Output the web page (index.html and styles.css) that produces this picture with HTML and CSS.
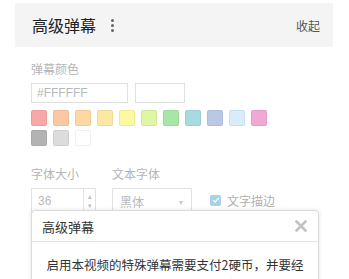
FILE: index.html
```html
<!DOCTYPE html>
<html lang="zh">
<head>
<meta charset="utf-8">
<link rel="stylesheet" href="styles.css">
</head>
<body>
<div class="panel">
  <div class="header">
    <span class="title">高级弹幕</span>
    <span class="dots"><i></i><i></i><i></i></span>
    <span class="collapse">收起</span>
  </div>
  <div class="content">
    <div class="label">弹幕颜色</div>
    <div class="color-row">
      <div class="text-input">#FFFFFF</div>
      <div class="preview"></div>
    </div>
    <div class="swatches">
      <span class="sw" style="background:#f7a8a8"></span>
      <span class="sw" style="background:#fcc8a2"></span>
      <span class="sw" style="background:#fdd8a2"></span>
      <span class="sw" style="background:#fde7a4"></span>
      <span class="sw" style="background:#fdf9a0"></span>
      <span class="sw" style="background:#def6a6"></span>
      <span class="sw" style="background:#a8e6a8"></span>
      <span class="sw" style="background:#a7dbe0"></span>
      <span class="sw" style="background:#b9c8e4"></span>
      <span class="sw" style="background:#d9ecfb"></span>
      <span class="sw" style="background:#f2a8d5"></span>
    </div>
    <div class="swatches">
      <span class="sw" style="background:#b3b3b3"></span>
      <span class="sw" style="background:#dcdcdc"></span>
      <span class="sw" style="background:#ffffff"></span>
    </div>
    <div class="font-row">
      <div class="field">
        <div class="label">字体大小</div>
        <div class="num-input">
          <span class="num">36</span>
          <span class="spin"><span>▴</span><span>▾</span></span>
        </div>
      </div>
      <div class="field">
        <div class="label">文本字体</div>
        <div class="select"><span>黑体</span><span class="arrow">▾</span></div>
      </div>
      <label class="check">
        <span class="box"><svg viewBox="0 0 10 10" width="8" height="8"><path d="M1.5 5.2 L4 7.5 L8.5 2.5" fill="none" stroke="#fff" stroke-width="1.6"/></svg></span>
        <span class="check-text">文字描边</span>
      </label>
    </div>
  </div>
  <div class="dialog">
    <div class="dialog-head">
      <span class="dialog-title">高级弹幕</span>
      <svg class="close" viewBox="0 0 12 12" width="12" height="12"><path d="M1.5 1.5 L10.5 10.5 M10.5 1.5 L1.5 10.5" stroke="#c2c2c2" stroke-width="2.6" stroke-linecap="round"/></svg>
    </div>
    <div class="dialog-body">启用本视频的特殊弹幕需要支付2硬币，并要经<br>UP主同意确认，是否要购买?</div>
  </div>
</div>
</body>
</html>
```
FILE: styles.css
```css
* { box-sizing: border-box; }
html, body { margin: 0; padding: 0; background: #fff; }
body {
  font-family: "Noto Sans CJK SC", "Liberation Sans", sans-serif;
  width: 349px;
  height: 279px;
  overflow: hidden;
}
.panel {
  position: relative;
  margin: 3px 16px 0 15px;
  height: 276px;
}
.header {
  height: 44px;
  background: #f4f4f4;
  display: flex;
  align-items: center;
  padding: 0 13px 0 17px;
}
.title {
  font-size: 16px;
  color: #222;
  line-height: 20px;
}
.dots {
  display: flex;
  flex-direction: column;
  gap: 2px;
  margin-left: 15px;
}
.dots i {
  display: block;
  width: 3px;
  height: 3px;
  background: #666;
  border-radius: 50%;
}
.collapse {
  margin-left: auto;
  font-size: 12px;
  color: #555;
}
.content {
  padding-left: 16px;
}
.label {
  font-size: 12px;
  color: #b5b5b5;
  line-height: 16px;
}
.content > .label { margin-top: 14px; }
.color-row {
  display: flex;
  gap: 7px;
  margin-top: 6px;
}
.text-input {
  width: 97px;
  height: 20px;
  border: 1px solid #e0e0e0;
  font-family: "Liberation Sans", sans-serif;
  font-size: 12px;
  color: #b8b8b8;
  line-height: 18px;
  padding-left: 5px;
}
.preview {
  width: 50px;
  height: 20px;
  border: 1px solid #e0e0e0;
}
.swatches {
  display: flex;
  gap: 6px;
  margin-top: 7px;
}
.swatches + .swatches { margin-top: 4px; }
.sw {
  width: 16px;
  height: 16px;
  border-radius: 2px;
  border: 1px solid rgba(0,0,0,0.06);
}
.font-row {
  display: flex;
  align-items: flex-end;
  margin-top: 20px;
}
.field .label { margin-bottom: 6px; }
.field + .field { margin-left: 16px; }
.num-input {
  width: 65px;
  height: 26px;
  border: 1px solid #e2e2e2;
  display: flex;
  align-items: center;
  font-family: "Liberation Sans", sans-serif;
}
.num {
  flex: 1;
  font-size: 12px;
  color: #b8b8b8;
  padding-left: 6px;
}
.spin {
  width: 12px;
  height: 100%;
  border-left: 1px solid #e4e4e4;
  display: flex;
  flex-direction: column;
  justify-content: center;
  align-items: center;
  font-size: 7px;
  line-height: 9px;
  color: #bbb;
}
.select {
  width: 80px;
  height: 26px;
  border: 1px solid #e2e2e2;
  display: flex;
  align-items: center;
  justify-content: space-between;
  padding: 0 8px 0 7px;
  font-size: 12px;
  color: #b8b8b8;
}
.arrow { font-size: 8px; color: #c8c8c8; }
.check {
  display: flex;
  align-items: center;
  margin-left: 18px;
  height: 26px;
  padding-bottom: 2px;
}
.box {
  width: 11px;
  height: 11px;
  background: #a6d3ea;
  border-radius: 2px;
  display: flex;
  align-items: center;
  justify-content: center;
}
.check-text {
  margin-left: 6px;
  font-size: 12px;
  color: #b0b0b0;
}
.dialog {
  position: absolute;
  left: 16px;
  top: 207px;
  width: 288px;
  height: 90px;
  background: #fff;
  border: 1px solid #dcdcdc;
  border-radius: 4px;
  box-shadow: 0 0 4px rgba(0,0,0,0.12);
}
.dialog-head {
  height: 31px;
  border-bottom: 1px solid #e5e5e5;
  display: flex;
  align-items: center;
  padding: 0 11px 0 10px;
}
.dialog-title {
  font-size: 13px;
  color: #333;
}
.close {
  margin-left: auto;
  display: block;
}
.dialog-body {
  text-align: center;
  font-size: 12.5px;
  line-height: 20px;
  color: #333;
  padding-top: 13px;
}
```
